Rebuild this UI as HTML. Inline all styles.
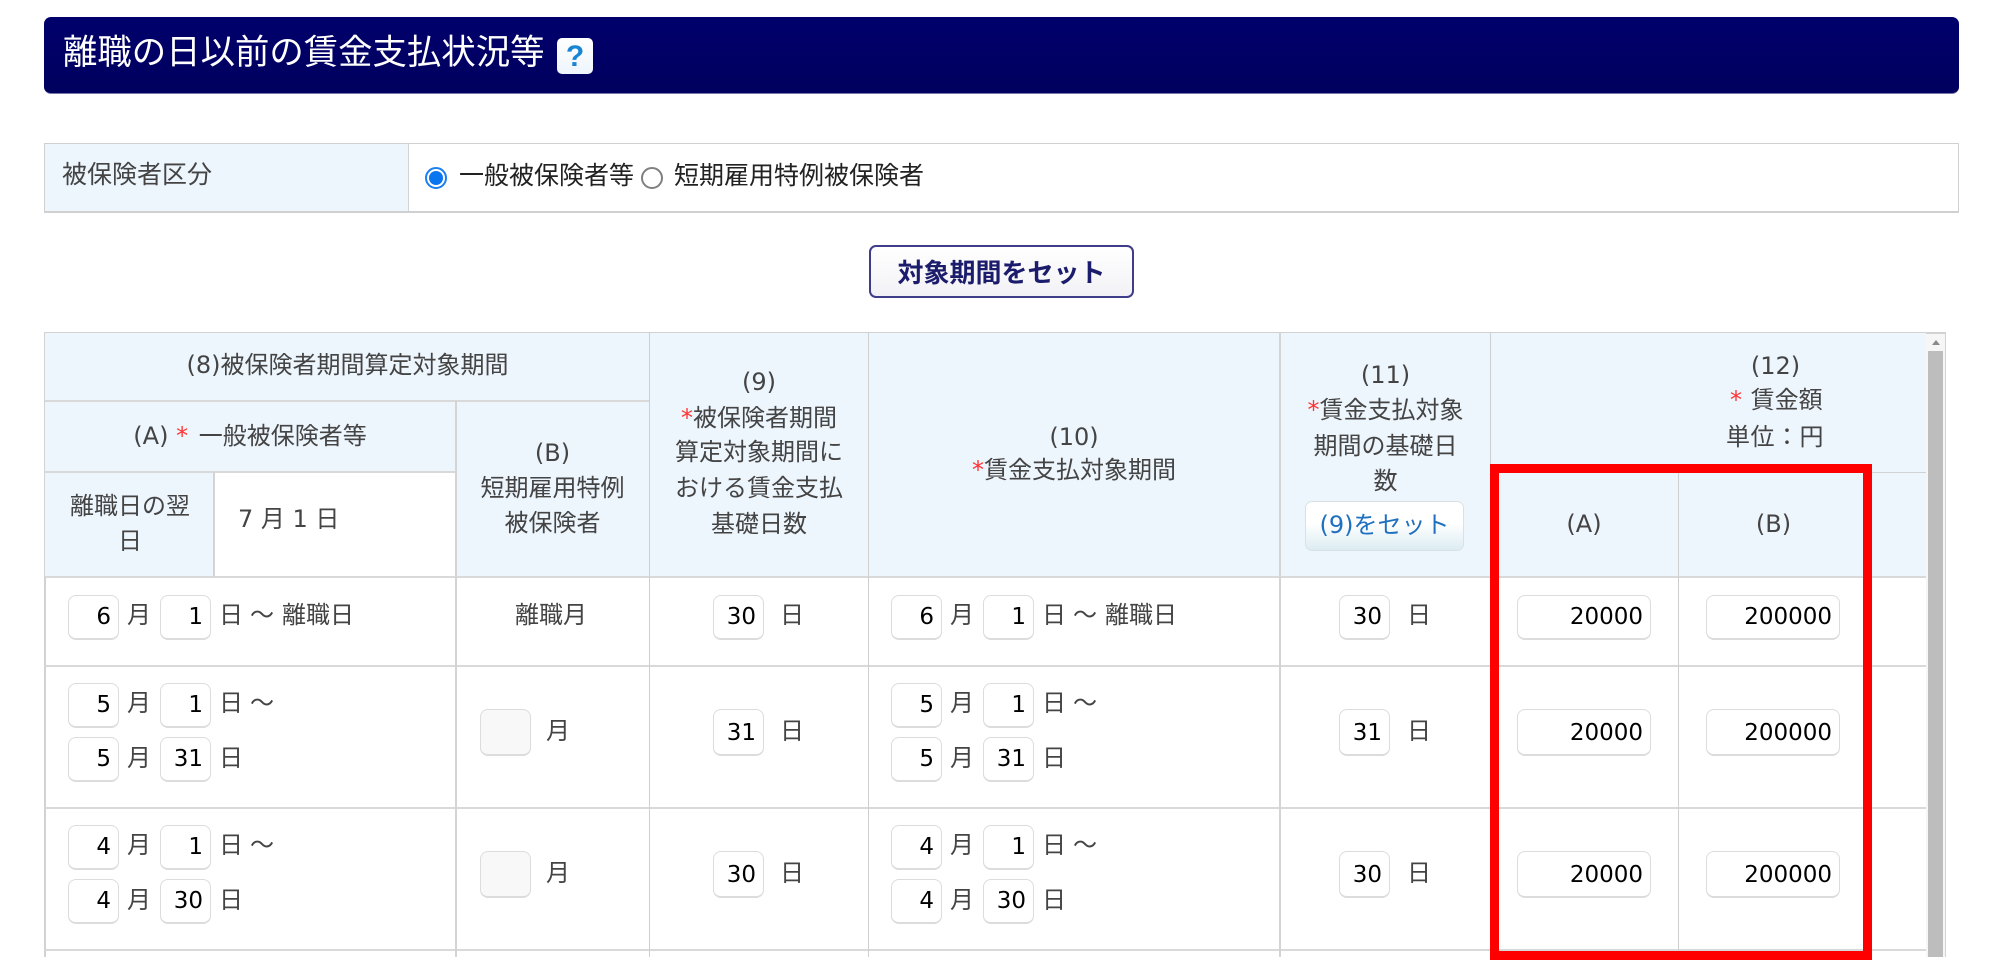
<!DOCTYPE html>
<html lang="ja"><head><meta charset="utf-8"><title>離職の日以前の賃金支払状況等</title>
<style>
html,body{margin:0;padding:0;background:#fff;width:2000px;height:960px;overflow:hidden}
body{position:relative;font-family:"DejaVu Sans","Noto Sans CJK JP",sans-serif;color:#444;font-size:24px}
div,span.t{position:absolute;box-sizing:border-box}
.t{line-height:36px;white-space:nowrap;font-size:24px;font-family:"DejaVu Sans","Noto Sans CJK JP",sans-serif}
.c{text-align:center}
.r{color:#f33}
.h{background:#d9d9d9;height:2px}
.v{background:#d4d4d4;width:2px;top:332px;height:625px}
.v1{background:#cfcfcf;width:1px;top:332px;height:625px}
.i{border:1.5px solid #dcdcdc;border-bottom-width:2px;border-radius:8px;background:#fff;color:#000;text-align:right;font-size:23px;padding-right:7px;height:45px;line-height:42px;width:51px}
.s{height:47px;line-height:46px;top:0}
.g{background:#f8f8f8}
.w{width:134px}
</style></head><body>

<div style="left:44px;top:17px;width:1915px;height:77px;background:linear-gradient(#00006c,#00005e);border-radius:7px;border-bottom:1px solid #7878a8"></div>
<div class="t" style="left:63px;top:30px;font-size:34.4px;line-height:46px;color:#fff">離職の日以前の賃金支払状況等</div>
<div style="left:557px;top:38px;width:36px;height:36px;background:linear-gradient(#fff,#eef5fc);border-radius:5px;color:#1a84d4;font:bold 30px/37px 'Liberation Sans',sans-serif;text-align:center">?</div>

<div style="left:44px;top:143px;width:1915px;height:70px;border:1.5px solid #d0d0d0;border-bottom-width:2px"></div>
<div style="left:45px;top:144px;width:364px;height:67px;background:#edf5fd;border-right:1px solid #d4d4d4"></div>
<div class="t" style="left:62px;top:157px;font-size:25px">被保険者区分</div>
<div style="left:425px;top:167px;width:22px;height:22px;border:2px solid #1a7ff0;border-radius:50%;background:#fff"></div>
<div style="left:429px;top:171px;width:14px;height:14px;border-radius:50%;background:#0a75f0"></div>
<div class="t" style="left:459px;top:158px;font-size:25px;color:#222">一般被保険者等</div>
<div style="left:641px;top:167px;width:22px;height:22px;border:2px solid #808080;border-radius:50%;background:#fff"></div>
<div class="t" style="left:674px;top:158px;font-size:25px;color:#222">短期雇用特例被保険者</div>

<div style="left:869px;top:245px;width:265px;height:53px;border:2.5px solid #3d3d8a;border-radius:7px;background:linear-gradient(#fff,#f2f2f6)"></div>
<div class="t c" style="left:869px;width:265px;top:256px;font-size:26px;font-weight:bold;color:#1c1c6c">対象期間をセット</div>

<!-- table frame -->
<div style="left:44px;top:332px;width:1902px;height:625px;border:solid #d2d2d2;border-width:2px 2px 0 2px;background:#fff"></div>
<div style="left:45px;top:333px;width:1881px;height:244px;background:#edf5fd"></div>
<div style="left:215px;top:473px;width:241px;height:104px;background:#fff"></div>

<div class="h" style="left:45px;top:400px;width:604px"></div>
<div class="h" style="left:45px;top:471px;width:411px"></div>
<div style="left:1490px;top:472px;width:436px;height:1px;background:#d2d2d2"></div>
<div class="h" style="left:45px;top:576px;width:1881px"></div>
<div class="h" style="left:45px;top:665px;width:1881px"></div>
<div class="h" style="left:45px;top:807px;width:1881px"></div>
<div class="h" style="left:45px;top:949px;width:1881px"></div>

<div class="v" style="left:213px;top:472px;height:105px"></div>
<div class="v" style="left:455px;top:401px;height:556px"></div>
<div class="v1" style="left:649px"></div>
<div class="v1" style="left:868px"></div>
<div class="v" style="left:1279px"></div>
<div class="v1" style="left:1490px"></div>
<div class="v1" style="left:1678px;top:473px;height:484px"></div>

<!-- scrollbar -->
<div style="left:1926px;top:334px;width:19px;height:623px;background:#f6f6f6"></div>
<div style="left:1928px;top:351px;width:15px;height:606px;background:#bdbdbd"></div>
<div style="left:1932px;top:340px;width:0;height:0;border-left:4px solid transparent;border-right:4px solid transparent;border-bottom:5px solid #8a8a8a"></div>

<!-- header text -->
<div class="t c" style="left:45px;width:605px;top:347px">(8)被保険者期間算定対象期間</div>
<div class="t c" style="left:44px;width:412px;top:418px">(A) <span class="r">*</span> <span style="margin-left:3px">一般被保険者等</span></div>
<div class="t c" style="left:45px;width:170px;top:488px">離職日の翌</div>
<div class="t c" style="left:45px;width:170px;top:523px">日</div>
<div class="t" style="left:238px;top:501px">7 月 1 日</div>
<div class="t c" style="left:456px;width:193px;top:435px">(B)</div>
<div class="t c" style="left:456px;width:193px;top:470px">短期雇用特例</div>
<div class="t c" style="left:456px;width:193px;top:505px">被保険者</div>

<div class="t c" style="left:650px;width:218px;top:364px">(9)</div>
<div class="t c" style="left:650px;width:218px;top:400px"><span class="r">*</span>被保険者期間</div>
<div class="t c" style="left:650px;width:218px;top:434px">算定対象期間に</div>
<div class="t c" style="left:650px;width:218px;top:470px">おける賃金支払</div>
<div class="t c" style="left:650px;width:218px;top:506px">基礎日数</div>

<div class="t c" style="left:869px;width:410px;top:419px">(10)</div>
<div class="t c" style="left:869px;width:410px;top:452px"><span class="r">*</span>賃金支払対象期間</div>

<div class="t c" style="left:1281px;width:209px;top:357px">(11)</div>
<div class="t c" style="left:1281px;width:209px;top:392px"><span class="r">*</span>賃金支払対象</div>
<div class="t c" style="left:1281px;width:209px;top:428px">期間の基礎日</div>
<div class="t c" style="left:1281px;width:209px;top:463px">数</div>
<div style="left:1305px;top:501px;width:159px;height:50px;border:1.5px solid #d8e2e6;border-radius:7px;background:linear-gradient(#fff 45%,#dcecf2);color:#1f70bf;text-align:center;font-size:24px;line-height:46px">(9)をセット</div>

<div class="t c" style="left:1491px;top:348px;width:569px">(12)</div>
<div class="t" style="left:1730px;top:382px"><span class="r">*</span>&nbsp;<span style="margin-left:1px">賃金額</span></div>
<div class="t" style="left:1726px;top:419px;letter-spacing:.5px">単位：円</div>
<div class="t c" style="left:1490px;width:188px;top:506px">(A)</div>
<div class="t c" style="left:1679px;width:189px;top:506px">(B)</div>

<!-- row 1 -->
<div class="i" style="left:68px;top:595px">6</div><div class="t" style="left:127px;top:597px">月</div>
<div class="i" style="left:160px;top:595px">1</div><div class="t" style="left:219px;top:597px">日</div>
<div class="t" style="left:250px;top:597px">～</div><div class="t" style="left:282px;top:597px">離職日</div>
<div class="t" style="left:515px;top:597px">離職月</div>
<div class="i" style="left:713px;top:595px">30</div><div class="t" style="left:780px;top:597px">日</div>
<div class="i" style="left:891px;top:595px">6</div><div class="t" style="left:950px;top:597px">月</div>
<div class="i" style="left:983px;top:595px">1</div><div class="t" style="left:1042px;top:597px">日</div>
<div class="t" style="left:1073px;top:597px">～</div><div class="t" style="left:1105px;top:597px">離職日</div>
<div class="i" style="left:1339px;top:595px">30</div><div class="t" style="left:1407px;top:597px">日</div>
<div class="i w" style="left:1517px;top:595px">20000</div>
<div class="i w" style="left:1706px;top:595px">200000</div>

<!-- row 2 -->
<div class="i" style="left:68px;top:683px">5</div><div class="t" style="left:127px;top:685px">月</div>
<div class="i" style="left:160px;top:683px">1</div><div class="t" style="left:219px;top:685px">日</div>
<div class="t" style="left:250px;top:685px">～</div>
<div class="i" style="left:68px;top:737px">5</div><div class="t" style="left:127px;top:740px">月</div>
<div class="i" style="left:160px;top:737px">31</div><div class="t" style="left:219px;top:740px">日</div>
<div class="i s g" style="left:480px;top:709px"></div><div class="t" style="left:546px;top:713px">月</div>
<div class="i s" style="left:713px;top:709px">31</div><div class="t" style="left:780px;top:713px">日</div>
<div class="i" style="left:891px;top:683px">5</div><div class="t" style="left:950px;top:685px">月</div>
<div class="i" style="left:983px;top:683px">1</div><div class="t" style="left:1042px;top:685px">日</div>
<div class="t" style="left:1073px;top:685px">～</div>
<div class="i" style="left:891px;top:737px">5</div><div class="t" style="left:950px;top:740px">月</div>
<div class="i" style="left:983px;top:737px">31</div><div class="t" style="left:1042px;top:740px">日</div>
<div class="i s" style="left:1339px;top:709px">31</div><div class="t" style="left:1407px;top:713px">日</div>
<div class="i s w" style="left:1517px;top:709px">20000</div>
<div class="i s w" style="left:1706px;top:709px">200000</div>

<!-- row 3 -->
<div class="i" style="left:68px;top:825px">4</div><div class="t" style="left:127px;top:827px">月</div>
<div class="i" style="left:160px;top:825px">1</div><div class="t" style="left:219px;top:827px">日</div>
<div class="t" style="left:250px;top:827px">～</div>
<div class="i" style="left:68px;top:879px">4</div><div class="t" style="left:127px;top:882px">月</div>
<div class="i" style="left:160px;top:879px">30</div><div class="t" style="left:219px;top:882px">日</div>
<div class="i s g" style="left:480px;top:851px"></div><div class="t" style="left:546px;top:855px">月</div>
<div class="i s" style="left:713px;top:851px">30</div><div class="t" style="left:780px;top:855px">日</div>
<div class="i" style="left:891px;top:825px">4</div><div class="t" style="left:950px;top:827px">月</div>
<div class="i" style="left:983px;top:825px">1</div><div class="t" style="left:1042px;top:827px">日</div>
<div class="t" style="left:1073px;top:827px">～</div>
<div class="i" style="left:891px;top:879px">4</div><div class="t" style="left:950px;top:882px">月</div>
<div class="i" style="left:983px;top:879px">30</div><div class="t" style="left:1042px;top:882px">日</div>
<div class="i s" style="left:1339px;top:851px">30</div><div class="t" style="left:1407px;top:855px">日</div>
<div class="i s w" style="left:1517px;top:851px">20000</div>
<div class="i s w" style="left:1706px;top:851px">200000</div>

<!-- red highlight -->
<div style="left:1490px;top:464px;width:382px;height:496px;border:9px solid #f00"></div>
</body></html>
